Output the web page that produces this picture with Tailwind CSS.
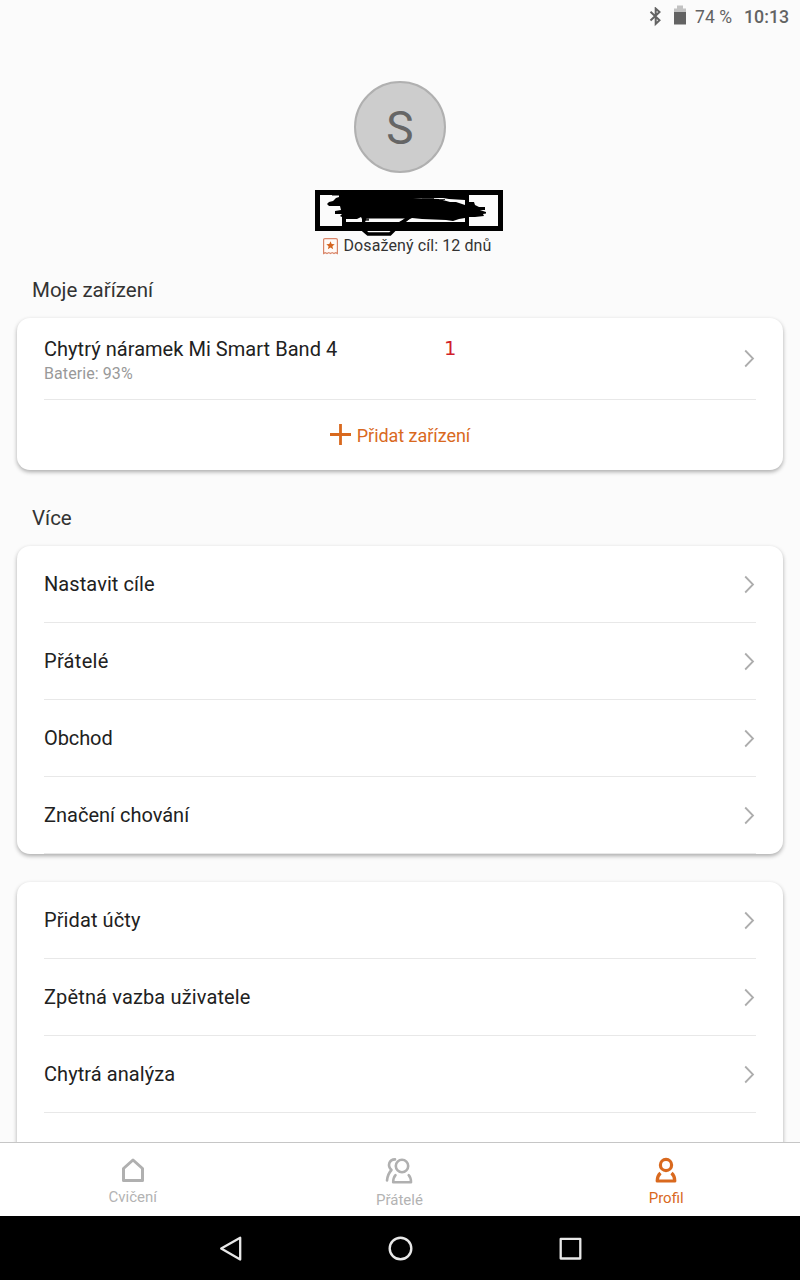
<!DOCTYPE html>
<html lang="cs">
<head>
<meta charset="utf-8">
<title>Profil</title>
<script src="https://cdn.jsdelivr.net/npm/@tailwindcss/browser@4"></script>
</head>
<body class="bg-[#fbfbfb] font-['Roboto',sans-serif] text-[#212121]">
<svg class="hidden"><symbol id="chev" viewBox="0 0 12 20"><path d="M1.200 2.500 L9 10.500 L1.200 18.500" fill="none" stroke="#adadad" stroke-width="1.800"/></symbol></svg>
<div class="flex h-[1280px] w-[800px] flex-col overflow-hidden">
  <header class="flex h-[34px] shrink-0 items-center justify-end pr-[11px] text-[18px] text-[#636363]">
    <svg class="mr-[11px] h-5 w-[14px]" viewBox="0 0 14 20" fill="none" stroke="#636363" stroke-width="2"><path d="M1.500 4.700 L10.500 13.300 L6.700 17 V1.600 L10.500 5 L1.500 13.500"/></svg>
    <svg class="mr-[9px] h-5 w-[12px] overflow-visible" viewBox="0 0 12 20"><path d="M0 1.500 H3 V-1.500 H9 V1.500 H12 V6 H0Z" fill="#c2c2c2"/><path d="M0 5 H12 V17.500 H0Z" fill="#636363"/></svg>
    <span class="w-[49px] text-[17.5px] tracking-[0.1px] whitespace-pre">74 %</span>
    <span class="w-[45px] text-[17.800px] font-medium whitespace-nowrap">10:13</span>
  </header>
  <main class="flex min-h-0 flex-1 flex-col overflow-hidden px-[17px]">
    <section class="flex h-[222px] shrink-0 flex-col items-center pt-[47px]">
      <div class="flex size-[92px] items-center justify-center rounded-full border-2 border-[#b0b0b0] bg-[#cdcdcd] text-[46px] leading-none text-[#666]"><span class="pt-[1px]">S</span></div>
      <svg class="mt-[17px] ml-[18px] h-[46px] w-[188px] shrink-0" viewBox="0 0 188 46">
        <path d="M2.500 2.500 H185.500 V38.500 H2.500Z" fill="none" stroke="#000" stroke-width="5"/>
        <path d="M17 4 H154 V12 L159 12 L160 15 L164 17 H170 V20 H165 L171 22 V23.500 L168 24 L169 26 L160 27 H154 V41 H27 V27 L25 26 L27 24 H20 V21 L26 20 L25 16 H14 L12 14 L14 12 L18 11 L21 8 L24 7 V5.500 H17Z"/>
        <path d="M31 29 H42 L46 27 L47 29 V32 H31Z M52 28.500 H90 L84 32 H50Z M93 30 L97 28 L107 29 L131 30 L138 31 L144 29 L150 28 V32 H90Z M98 8 L124 9 L135 12 L141 12 L150 15 V10 L134 9 L128 8Z" fill="#fbfbfb"/>
        <path d="M93 28 L79 40 L75 44 H53 L47 39" fill="none" stroke="#000" stroke-width="3.500"/>
        <path d="M51 29.500h3" stroke="#333" stroke-width="2.500"/><path d="M107 8.500h12m5 1h6" stroke="#333" stroke-width="1"/>
      </svg>
      <div class="ml-[14px] flex h-[20px] shrink-0 items-center text-[16px] leading-5 text-[#333]">
        <svg class="mr-[6px] h-[17px] w-[15px]" viewBox="0 0 15 17"><path d="M.6 15.500 V1.500 Q.6 .6 2 .6 H13 Q14.400 .6 14.400 2 V15.500 L12.700 14.600 L11 15.600 L9.200 14.600 L7.500 15.600 L5.800 14.600 L4 15.600 L2.300 14.600Z" fill="#fffaf7" stroke="#d98568" stroke-width="1.200"/><path d="M7.500 3.300 L8.700 6.100 L11.700 6.300 L9.400 8.300 L10.100 11.200 L7.500 9.600 L4.900 11.200 L5.600 8.300 L3.300 6.300 L6.300 6.100Z" fill="#d4641f"/></svg>
        <span class="tracking-[0.1px] whitespace-nowrap">Dosažený cíl: 12 dnů</span>
      </div>
    </section>
    <h2 class="flex h-[62px] shrink-0 items-center pl-[15px] text-[20.500px] leading-6 text-[#333]"><span class="pt-[6px]">Moje zařízení</span></h2>
    <section class="h-[152px] shrink-0 rounded-[13px] bg-white px-[27px] shadow-[0_2px_4px_rgba(0,0,0,0.32)]">
      <div class="flex h-[82px] items-center justify-between border-b border-[#e8e8e8]">
        <div class="pt-[4px]"><div class="flex items-center text-[20px] leading-6"><span class="w-[400px] tracking-[0.04px]">Chytrý náramek Mi Smart Band 4</span><span class="font-['DejaVu_Sans',sans-serif] text-[19.500px] leading-[22px] text-[#d21f2b]">1</span></div><div class="pt-[2px] text-[16px] leading-[21px] tracking-[0.08px] text-[#999]">Baterie: 93%</div></div>
        <svg class="mb-[2px] h-5 w-3"><use href="#chev"/></svg>
      </div>
      <div class="flex h-[70px] items-center justify-center gap-[6px] text-[18px] text-[#d9691e]"><svg class="mb-[2px] size-[21px]" viewBox="0 0 21 21"><path d="M10.500 0V21M0 10.500H21" stroke="#d9691e" stroke-width="2.800"/></svg><span class="tracking-[-0.05px]">Přidat zařízení</span></div>
    </section>
    <h2 class="flex h-[76px] shrink-0 items-center pl-[15px] text-[20.500px] leading-6 text-[#333]"><span class="pt-[20px]">Více</span></h2>
    <section class="h-[308px] shrink-0 rounded-[13px] bg-white px-[27px] text-[20px] shadow-[0_2px_4px_rgba(0,0,0,0.32)]">
      <div class="flex h-[77px] items-center justify-between border-b border-[#e8e8e8]"><span class="tracking-[0.08px]">Nastavit cíle</span><svg class="h-5 w-3"><use href="#chev"/></svg></div>
      <div class="flex h-[77px] items-center justify-between border-b border-[#e8e8e8]"><span class="tracking-[0.3px]">Přátelé</span><svg class="h-5 w-3"><use href="#chev"/></svg></div>
      <div class="flex h-[77px] items-center justify-between border-b border-[#e8e8e8]"><span class="tracking-[-0.1px]">Obchod</span><svg class="h-5 w-3"><use href="#chev"/></svg></div>
      <div class="flex h-[77px] items-center justify-between border-b border-[#e8e8e8]"><span>Značení chování</span><svg class="h-5 w-3"><use href="#chev"/></svg></div>
    </section>
    <section class="mt-7 h-[308px] shrink-0 rounded-[13px] bg-white px-[27px] text-[20px] shadow-[0_2px_4px_rgba(0,0,0,0.32)]">
      <div class="flex h-[77px] items-center justify-between border-b border-[#e8e8e8]"><span class="tracking-[0.1px]">Přidat účty</span><svg class="h-5 w-3"><use href="#chev"/></svg></div>
      <div class="flex h-[77px] items-center justify-between border-b border-[#e8e8e8]"><span class="tracking-[0.14px]">Zpětná vazba uživatele</span><svg class="h-5 w-3"><use href="#chev"/></svg></div>
      <div class="flex h-[77px] items-center justify-between border-b border-[#e8e8e8]"><span class="tracking-[0.07px]">Chytrá analýza</span><svg class="h-5 w-3"><use href="#chev"/></svg></div>
    </section>
  </main>
  <nav class="grid h-[74px] shrink-0 grid-cols-3 border-t border-[#c6c6c6] bg-white text-[15px] leading-5 text-[#b3b3b3]">
    <div class="flex flex-col items-center pt-[14px] pr-[1px]"><svg class="h-[26px] w-[24px]" viewBox="0 0 24 26" fill="none" stroke="#b0b0b0" stroke-width="3" stroke-linejoin="round"><path d="M2.500 11.500 L12 3 L21.500 11.500 V23.500 H2.500Z"/></svg><span class="pt-[4px]">Cvičení</span></div>
    <div class="flex flex-col items-center pt-[14px] pr-[1px]"><svg class="h-[28px] w-[28px]" viewBox="0 0 28 28" fill="none" stroke="#b0b0b0" stroke-width="2.600" stroke-linecap="round"><circle cx="17" cy="9" r="6.200"/><path d="M10 2.400 C4 2.400 2 9 6.500 13 C4 15.500 2.500 19 2 23.500 M10.500 18.200 C8.800 20 8.200 22.500 8.200 25.300 H26 C26 22.500 25.400 20 23.700 18.200" stroke-linejoin="round"/></svg><span class="pt-[5px]">Přátelé</span></div>
    <div class="flex flex-col items-center pt-[14px] pr-[1px] text-[#d9691e]"><svg class="h-[28px] w-[22px]" viewBox="0 0 22 28" fill="none" stroke="#d9691e" stroke-width="3.200"><circle cx="11" cy="8" r="5.600"/><path d="M5.500 16 C3.500 17.800 2.200 20 2.200 24 H19.800 C19.800 20 18.500 17.800 16.500 16" stroke-linejoin="round"/></svg><span class="pt-[3px]">Profil</span></div>
  </nav>
  <footer class="flex h-16 shrink-0 items-center justify-center gap-[144px] bg-black">
    <svg class="size-[26px]" viewBox="0 0 26 26" fill="none" stroke="#e8e8e8" stroke-width="2.300" stroke-linejoin="round"><path d="M23.200 2.800 V24.500 L4.200 13.600Z"/></svg>
    <svg class="size-[26px]" viewBox="0 0 26 26" fill="none" stroke="#e8e8e8" stroke-width="2.400"><circle cx="13.500" cy="13.500" r="10.800"/></svg>
    <svg class="size-[26px]" viewBox="0 0 26 26" fill="none" stroke="#e8e8e8" stroke-width="2.300" stroke-linejoin="round"><path d="M3.700 3.900 H23.300 V23.500 H3.700Z"/></svg>
  </footer>
</div>
</body>
</html>
